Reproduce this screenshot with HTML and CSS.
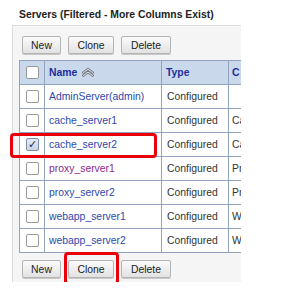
FILE: index.html
```html
<!DOCTYPE html>
<html lang="en">
<head>
    <meta charset="UTF-8">
    <title>Servers</title>
    <link rel="stylesheet" href="styles.css">
</head>
<body>

<h2 class="title">Servers (Filtered - More Columns Exist)</h2>

<div class="panel">
    <div class="buttons">
        <button>New</button>
        <button>Clone</button>
        <button>Delete</button>
    </div>

    <table class="servers">
        <colgroup>
            <col class="c-check">
            <col class="c-name">
            <col class="c-type">
            <col class="c-more">
        </colgroup>
        <thead>
            <tr>
                <th class="check"><span class="box"></span></th>
                <th>Name
                    <svg class="sort" width="14" height="10" viewBox="0 0 14 10">
                        <path d="M1 5.5 L7 1 L13 5.5 L11.5 6.5 L7 3.2 L2.5 6.5 Z" fill="#d4d8de" stroke="#5a6270" stroke-width="0.8"/>
                        <path d="M1 8.5 L7 4 L13 8.5 L11.5 9.5 L7 6.2 L2.5 9.5 Z" fill="#d4d8de" stroke="#5a6270" stroke-width="0.8"/>
                    </svg>
                </th>
                <th>Type</th>
                <th>C</th>
            </tr>
        </thead>
        <tbody>
            <tr><td class="check"><span class="box"></span></td><td><a href="#">AdminServer(admin)</a></td><td>Configured</td><td></td></tr>
            <tr><td class="check"><span class="box"></span></td><td><a href="#">cache_server1</a></td><td>Configured</td><td>Ca</td></tr>
            <tr><td class="check"><span class="box checked">&#10003;</span></td><td><a href="#">cache_server2</a></td><td>Configured</td><td>Ca</td></tr>
            <tr><td class="check"><span class="box"></span></td><td><a href="#" class="visited">proxy_server1</a></td><td>Configured</td><td>Pr</td></tr>
            <tr><td class="check"><span class="box"></span></td><td><a href="#">proxy_server2</a></td><td>Configured</td><td>Pr</td></tr>
            <tr><td class="check"><span class="box"></span></td><td><a href="#">webapp_server1</a></td><td>Configured</td><td>W</td></tr>
            <tr><td class="check"><span class="box"></span></td><td><a href="#">webapp_server2</a></td><td>Configured</td><td>W</td></tr>
        </tbody>
    </table>

    <div class="buttons">
        <button>New</button>
        <button>Clone</button>
        <button>Delete</button>
    </div>
</div>

<!-- callouts -->
<div class="mark mark-row"></div>
<div class="mark mark-clone"></div>

</body>
</html>
```

FILE: styles.css
```css
body {
    font-family: "Liberation Sans", Arial, sans-serif;
    font-size: 10.4px;
    margin: 0;
    padding: 0;
    background-color: white;
    color: #333;
    position: relative;
}
.title {
    font-size: 10.4px;
    font-weight: bold;
    color: #222;
    margin: 0;
    padding: 9px 0 0 19px;
    height: 16px;
}
.panel {
    margin-left: 12px;
    width: 229px;
    height: 257px;
    box-sizing: border-box;
    background-color: #f5f5f5;
    border-top: 1px solid #dcdcdc;
    border-left: 1px solid #dcdcdc;
    padding: 10px 0 0 6px;
    overflow: hidden;
}
.buttons {
    display: flex;
    gap: 7px;
    padding-left: 3px;
}
.buttons button {
    font-family: inherit;
    font-size: 10.4px;
    color: #222;
    height: 18px;
    padding: 0 8px;
    border: 1px solid #b4b4b4;
    border-radius: 2px;
    background: linear-gradient(#fbfbfb, #e2e2e2);
    box-shadow: 0 1px 0 #c8c8c8;
}
.buttons button:nth-child(1) {
    width: 39px;
}
.buttons button:nth-child(2) {
    width: 46px;
}
.buttons button:nth-child(3) {
    width: 50px;
}
.servers {
    border-collapse: collapse;
    table-layout: fixed;
    width: 300px;
    margin: 6px 0 7px 0;
    background-color: white;
}
.c-check {
    width: 25px;
}
.c-name {
    width: 117px;
}
.c-type {
    width: 67px;
}
.servers th, .servers td {
    border: 1px solid #8fa3bf;
    height: 23px;
    padding: 0 0 0 4px;
    text-align: left;
    white-space: nowrap;
    overflow: hidden;
}
.servers th {
    background-color: #cad8ec;
    color: #1c2e9c;
    font-weight: bold;
}
.servers td:nth-child(3) {
    padding-left: 5px;
}
.servers td:nth-child(4), .servers th:nth-child(4) {
    padding-left: 3px;
}
.servers .check {
    padding: 0 0 0 6px;
}
.sort {
    vertical-align: -1px;
    margin-left: 1px;
}
.box {
    display: block;
    width: 11px;
    height: 11px;
    border: 1px solid #9a9a9a;
    border-radius: 2px;
    background-color: white;
    box-sizing: content-box;
}
.box.checked {
    background: linear-gradient(#e6ecf4, #c9d4e4);
    border-color: #7d8fab;
    color: #1e2a40;
    font-size: 11px;
    line-height: 11px;
    text-align: center;
    font-family: "DejaVu Sans", sans-serif;
}
.servers a {
    color: #2b49ae;
    text-decoration: none;
}
.servers a.visited {
    color: #8b2a8f;
}
.mark {
    position: absolute;
    border: 3px solid #e8000b;
    border-radius: 4px;
    box-sizing: border-box;
}
.mark-row {
    left: 10px;
    top: 133px;
    width: 147px;
    height: 25px;
}
.mark-clone {
    left: 64px;
    top: 252px;
    width: 55px;
    height: 33px;
}
```
